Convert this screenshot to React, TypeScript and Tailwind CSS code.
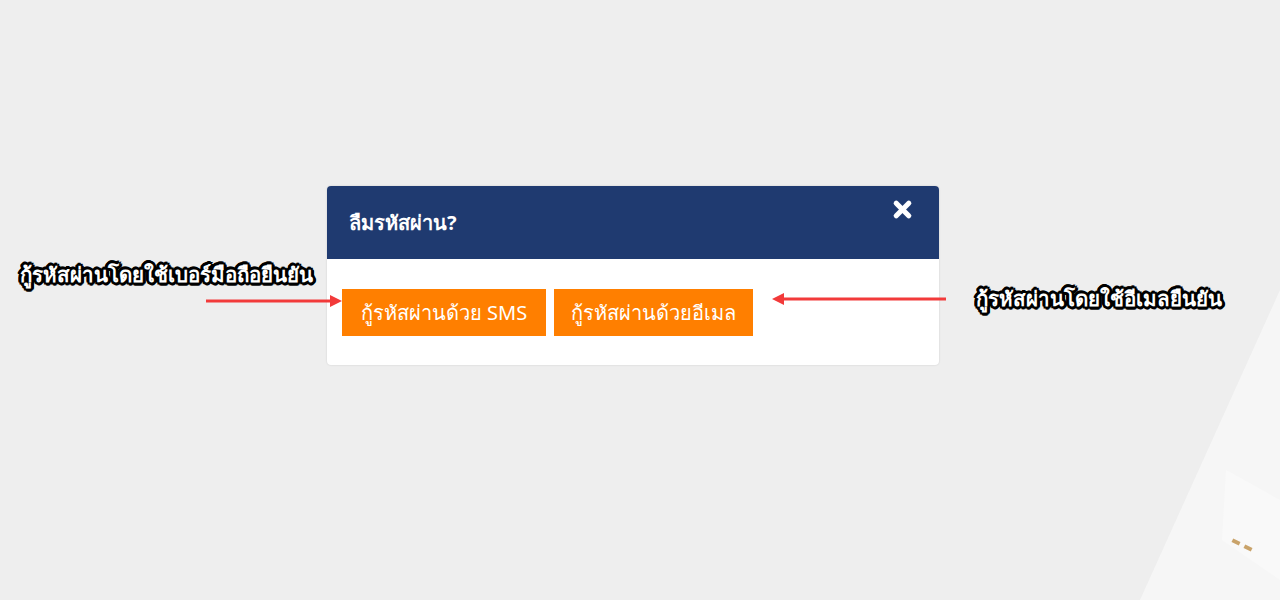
import { X } from "lucide-react";

const font = { fontFamily: '"Noto Sans", "DejaVu Sans", sans-serif' };

function Arrow({ dir, width }: { dir: "left" | "right"; width: number }) {
  return (
    <svg width={width} height="14" viewBox={`0 0 ${width} 14`} className="block">
      {dir === "right" ? (
        <>
          <line x1="0" y1="7" x2={width - 12} y2="7" stroke="#f23a3a" strokeWidth="3" />
          <polygon points={`${width - 14},1 ${width - 2},7 ${width - 14},13`} fill="#f23a3a" />
        </>
      ) : (
        <>
          <line x1="12" y1="7" x2={width} y2="7" stroke="#f23a3a" strokeWidth="3" />
          <polygon points="14,1 2,7 14,13" fill="#f23a3a" />
        </>
      )}
    </svg>
  );
}

const note =
  "absolute text-[20.5px] font-bold text-white [text-shadow:2px_0_0_#000,-2px_0_0_#000,0_2px_0_#000,0_-2px_0_#000,2px_2px_0_#000,-2px_-2px_0_#000,2px_-2px_0_#000,-2px_2px_0_#000,3px_0_0_#000,-3px_0_0_#000,0_3px_0_#000,0_-3px_0_#000,1px_3px_0_#000,-1px_-3px_0_#000,3px_1px_0_#000,-3px_-1px_0_#000]";

export default function App() {
  return (
    <div
      className="relative h-[600px] w-[1280px] overflow-hidden bg-[#eeeeee]"
      style={font}
    >
      {/* faint background shapes, bottom right */}
      <svg className="absolute inset-0" width="1280" height="600" viewBox="0 0 1280 600">
        <polygon points="1280,290 1140,600 1280,600" fill="#f6f6f6" />
        <polygon points="1226,470 1280,500 1280,580 1222,540" fill="#f9f9f9" />
        <rect x="1232" y="540" width="8" height="4" fill="#c9a36a" transform="rotate(25 1236 542)" />
        <rect x="1244" y="546" width="8" height="4" fill="#c9a36a" transform="rotate(25 1248 548)" />
      </svg>

      <div className="relative pl-[327px] pt-[186px]">
        <div className="w-[612px] overflow-hidden rounded-[4px] bg-white shadow-[0_0_2px_rgba(0,0,0,0.15)]">
          <div className="flex h-[73px] items-start justify-between bg-[#1f3a70] pl-[22px] pr-[24px]">
            <h2 className="mt-[22px] text-[20px] font-bold text-white">ลืมรหัสผ่าน?</h2>
            <button className="mt-[11px] text-white" aria-label="close">
              <X className="h-[25px] w-[25px]" strokeWidth={5} />
            </button>
          </div>
          <div className="flex gap-[8px] pb-[29px] pl-[15px] pt-[30px]">
            <button className="flex h-[47px] w-[204px] items-center justify-center bg-[#ff7f00] text-[20px] text-white">
              กู้รหัสผ่านด้วย SMS
            </button>
            <button className="flex h-[47px] w-[199px] items-center justify-center bg-[#ff7f00] text-[20px] text-white">
              กู้รหัสผ่านด้วยอีเมล
            </button>
          </div>
        </div>
      </div>

      {/* annotations */}
      <div className={`${note} left-[20px] top-[259px]`}>กู้รหัสผ่านโดยใช้เบอร์มือถือยืนยัน</div>
      <div className="absolute left-[206px] top-[294px]">
        <Arrow dir="right" width={138} />
      </div>
      <div className="absolute left-[770px] top-[292px]">
        <Arrow dir="left" width={176} />
      </div>
      <div className={`${note} left-[976px] top-[283px]`}>กู้รหัสผ่านโดยใช้อีเมลยืนยัน</div>
    </div>
  );
}
